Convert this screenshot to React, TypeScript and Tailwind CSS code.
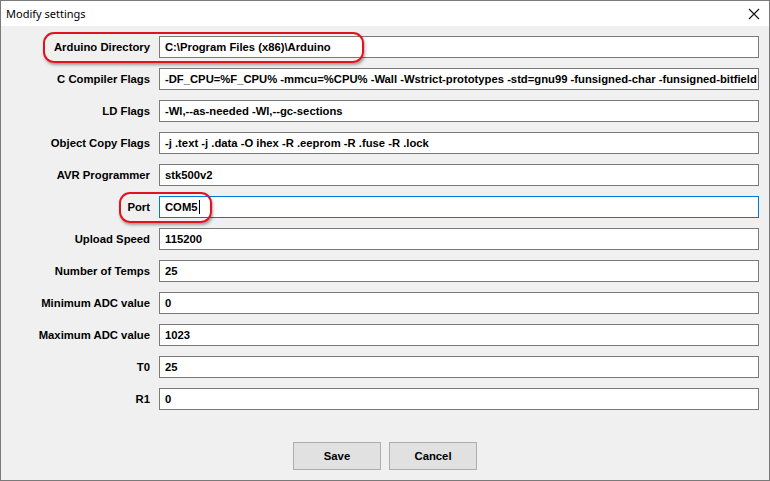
import React from "react"

const fields: { label: string; value: string; focused?: boolean }[] = [
  { label: "Arduino Directory", value: "C:\\Program Files (x86)\\Arduino" },
  { label: "C Compiler Flags", value: "-DF_CPU=%F_CPU% -mmcu=%CPU% -Wall -Wstrict-prototypes -std=gnu99 -funsigned-char -funsigned-bitfield" },
  { label: "LD Flags", value: "-Wl,--as-needed -Wl,--gc-sections" },
  { label: "Object Copy Flags", value: "-j .text -j .data -O ihex -R .eeprom -R .fuse -R .lock" },
  { label: "AVR Programmer", value: "stk500v2" },
  { label: "Port", value: "COM5", focused: true },
  { label: "Upload Speed", value: "115200" },
  { label: "Number of Temps", value: "25" },
  { label: "Minimum ADC value", value: "0" },
  { label: "Maximum ADC value", value: "1023" },
  { label: "T0", value: "25" },
  { label: "R1", value: "0" },
]

export default function App() {
  return (
    <div className="relative w-[770px] h-[481px] bg-[#f0f0f0] border border-[#7a7a7a] flex flex-col font-['Liberation_Sans',Arial,sans-serif] text-black overflow-hidden">
      {/* title bar */}
      <div className="h-[25px] shrink-0 bg-white flex items-center justify-between pl-[5px] pr-[9px]">
        <span className="text-[11px] font-['Noto_Sans',sans-serif] text-black leading-none">Modify settings</span>
        <svg width="12" height="12" viewBox="0 0 12 12" className="mt-[1px]">
          <path d="M1 1 L11 11 M11 1 L1 11" stroke="#111" strokeWidth="1.1" />
        </svg>
      </div>

      <div className="flex-1 flex flex-col pt-[10px]">
        <div className="grid grid-cols-[149px_600px] gap-x-[9px] gap-y-[10px]">
          {fields.map((f) => (
            <React.Fragment key={f.label}>
              <div className="h-[22px] flex items-center justify-end text-[11.3px] font-bold">{f.label}</div>
              <div
                className={`h-[22px] bg-white border flex items-center pl-[5px] text-[11.25px] font-bold whitespace-nowrap overflow-hidden ${
                  f.focused ? "border-[#0078d7]" : "border-[#7a7a7a]"
                }`}
              >
                {f.value}
                {f.focused && <span className="inline-block w-px h-[14px] bg-black ml-px" />}
              </div>
            </React.Fragment>
          ))}
        </div>

        <div className="flex justify-center gap-[8px] mt-[32px]">
          <button className="w-[88px] h-[28px] bg-[#e1e1e1] border border-[#adadad] text-[11.3px] font-bold">Save</button>
          <button className="w-[88px] h-[28px] bg-[#e1e1e1] border border-[#adadad] text-[11.3px] font-bold">Cancel</button>
        </div>
      </div>

      {/* red annotation ovals */}
      <div className="absolute left-[42px] top-[31px] w-[321px] h-[31px] border-2 border-[#e0141e] rounded-[11px] shadow-[1px_2px_3px_rgba(0,0,0,0.35)]" />
      <div className="absolute left-[118px] top-[191px] w-[93px] h-[31px] border-2 border-[#e0141e] rounded-[11px] shadow-[1px_2px_3px_rgba(0,0,0,0.35)]" />
    </div>
  )
}
